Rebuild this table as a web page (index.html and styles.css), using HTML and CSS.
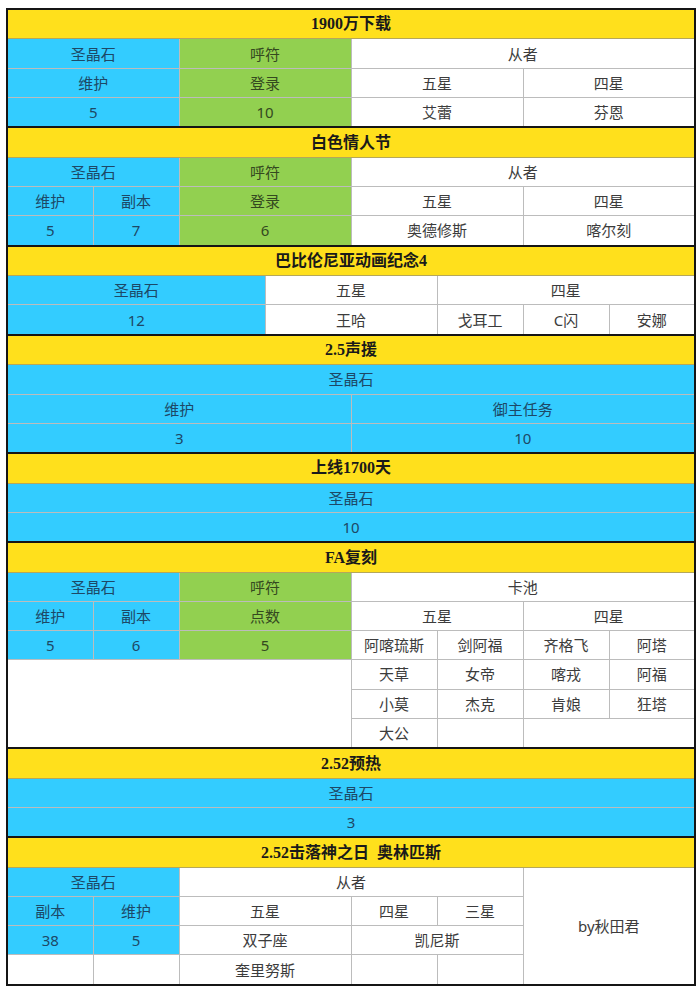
FILE: index.html
```html
<!DOCTYPE html>
<html lang="zh-CN">
<head>
<meta charset="utf-8">
<title>活动圣晶石统计</title>
<link rel="stylesheet" href="styles.css">
</head>
<body>
<table class="sheet">
<colgroup><col><col><col><col><col><col><col><col></colgroup>
<tbody>
<tr class="title"><td colspan="8">1900万下载</td></tr>
<tr><td class="b" colspan="2">圣晶石</td><td class="g" colspan="2">呼符</td><td colspan="4">从者</td></tr>
<tr><td class="b" colspan="2">维护</td><td class="g" colspan="2">登录</td><td colspan="2">五星</td><td colspan="2">四星</td></tr>
<tr class="end"><td class="b" colspan="2">5</td><td class="g" colspan="2">10</td><td colspan="2">艾蕾</td><td colspan="2">芬恩</td></tr>

<tr class="title"><td colspan="8">白色情人节</td></tr>
<tr><td class="b" colspan="2">圣晶石</td><td class="g" colspan="2">呼符</td><td colspan="4">从者</td></tr>
<tr><td class="b">维护</td><td class="b">副本</td><td class="g" colspan="2">登录</td><td colspan="2">五星</td><td colspan="2">四星</td></tr>
<tr class="end"><td class="b">5</td><td class="b">7</td><td class="g" colspan="2">6</td><td colspan="2">奥德修斯</td><td colspan="2">喀尔刻</td></tr>

<tr class="title"><td colspan="8">巴比伦尼亚动画纪念4</td></tr>
<tr><td class="b" colspan="3">圣晶石</td><td colspan="2">五星</td><td colspan="3">四星</td></tr>
<tr class="end"><td class="b" colspan="3">12</td><td colspan="2">王哈</td><td>戈耳工</td><td>C闪</td><td>安娜</td></tr>

<tr class="title"><td colspan="8">2.5声援</td></tr>
<tr><td class="b" colspan="8">圣晶石</td></tr>
<tr><td class="b" colspan="4">维护</td><td class="b" colspan="4">御主任务</td></tr>
<tr class="end"><td class="b" colspan="4">3</td><td class="b" colspan="4">10</td></tr>

<tr class="title"><td colspan="8">上线1700天</td></tr>
<tr><td class="b" colspan="8">圣晶石</td></tr>
<tr class="end"><td class="b" colspan="8">10</td></tr>

<tr class="title"><td colspan="8">FA复刻</td></tr>
<tr><td class="b" colspan="2">圣晶石</td><td class="g" colspan="2">呼符</td><td colspan="4">卡池</td></tr>
<tr><td class="b">维护</td><td class="b">副本</td><td class="g" colspan="2">点数</td><td colspan="2">五星</td><td colspan="2">四星</td></tr>
<tr><td class="b">5</td><td class="b">6</td><td class="g" colspan="2">5</td><td>阿喀琉斯</td><td>剑阿福</td><td>齐格飞</td><td>阿塔</td></tr>
<tr><td class="blank" colspan="4" rowspan="3"></td><td>天草</td><td>女帝</td><td>喀戎</td><td>阿福</td></tr>
<tr><td>小莫</td><td>杰克</td><td>肯娘</td><td>狂塔</td></tr>
<tr class="end"><td>大公</td><td></td><td colspan="2"></td></tr>

<tr class="title"><td colspan="8">2.52预热</td></tr>
<tr><td class="b" colspan="8">圣晶石</td></tr>
<tr class="end"><td class="b" colspan="8">3</td></tr>

<tr class="title"><td colspan="8">2.52击落神之日&nbsp;&nbsp;奥林匹斯</td></tr>
<tr><td class="b" colspan="2">圣晶石</td><td colspan="4">从者</td><td class="credit" colspan="2" rowspan="4">by秋田君</td></tr>
<tr><td class="b">副本</td><td class="b">维护</td><td colspan="2">五星</td><td>四星</td><td>三星</td></tr>
<tr><td class="b">38</td><td class="b">5</td><td colspan="2">双子座</td><td colspan="2">凯尼斯</td></tr>
<tr class="end"><td></td><td></td><td colspan="2">奎里努斯</td><td></td><td></td></tr>
</tbody>
</table>
</body>
</html>
```

FILE: styles.css
```css
html, body {
  margin: 0;
  background: #ffffff;
}

body {
  padding: 8px 0 0 6px;
}

.sheet {
  border-collapse: collapse;
  table-layout: fixed;
  width: 689px;
  height: 978px;
  border: 2px solid #151515;
  font-family: "Noto Sans", "Noto Sans CJK SC", sans-serif;
  font-size: 15px;
  font-weight: 400;
  color: #3c3c3c;
}

.sheet col {
  width: 86px;
}

.sheet td {
  border: 1px solid #bcbcbc;
  text-align: center;
  vertical-align: middle;
  padding: 0;
  line-height: 18px;
  background: #ffffff;
}

.sheet .title td {
  background: #ffe01c;
  border-bottom-color: #b5a75a;
  font-family: "Liberation Serif", "Noto Sans CJK SC", serif;
  font-weight: bold;
  font-size: 16px;
  color: #1a1a1a;
}

.sheet td.b {
  background: #33ccff;
  color: #1d4866;
}

.sheet td.g {
  background: #92d050;
  color: #34491f;
}

.sheet .end td,
.sheet td.blank {
  border-bottom: 2px solid #151515;
}
```
